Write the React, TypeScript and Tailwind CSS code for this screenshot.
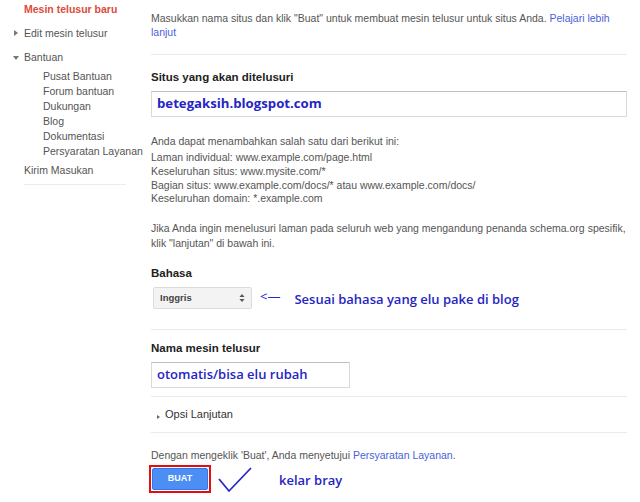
import React from 'react';

const sans = { fontFamily: '"Liberation Sans", Arial, sans-serif' };

function Sidebar() {
  const sub = ['Pusat Bantuan', 'Forum bantuan', 'Dukungan', 'Blog', 'Dokumentasi', 'Persyaratan Layanan'];
  return (
    <div className="w-[151px] shrink-0 pl-[24px] pt-[3px] text-[10.5px] text-[#555]">
      <div className="h-[13px] leading-[13px] font-bold text-[#dd4b39]">Mesin telusur baru</div>
      <div className="relative mt-[11px] h-[13px] leading-[13px]">
        <span className="absolute left-[-10px] top-[3px] h-0 w-0 border-y-[3px] border-l-[4px] border-y-transparent border-l-[#777]" />
        Edit mesin telusur
      </div>
      <div className="relative mt-[11px] h-[13px] leading-[13px]">
        <span className="absolute left-[-11px] top-[5px] h-0 w-0 border-x-[3px] border-t-[4px] border-x-transparent border-t-[#777]" />
        Bantuan
      </div>
      <div className="mt-[5px] pl-[19px]">
        {sub.map(s => (
          <div key={s} className="h-[15px] leading-[15px]">{s}</div>
        ))}
      </div>
      <div className="mt-[5px] h-[13px] leading-[13px]">Kirim Masukan</div>
      <div className="mt-[7px] w-[102px] border-t border-[#ebebeb]" />
    </div>
  );
}

function Arrows() {
  return (
    <svg width="6" height="10" viewBox="0 0 6 10" className="shrink-0">
      <path d="M0.5 4 L3 1 L5.5 4 Z" fill="#555" />
      <path d="M0.5 6 L3 9 L5.5 6 Z" fill="#555" />
    </svg>
  );
}

export default function App() {
  const annot = { fontFamily: '"Open Sans", "Noto Sans", sans-serif' };
  return (
    <div className="flex h-[502px] w-[640px] overflow-hidden bg-white" style={sans}>
      <Sidebar />
      <div className="w-[476px] pt-[11px] text-[10.5px] text-[#555]">
        <p className="leading-[14px]">
          Masukkan nama situs dan klik "Buat" untuk membuat mesin telusur untuk situs Anda.{' '}
          <span className="text-[#4a5fd8]">Pelajari lebih lanjut</span>
        </p>
        <div className="mt-[15px] border-t border-[#ebebeb]" />

        <div className="mt-[15px] text-[11.5px] font-bold leading-[14px] text-[#222]">Situs yang akan ditelusuri</div>
        <div className="mt-[7px] flex h-[26px] items-center border border-[#d9d9d9] border-t-[#c0c0c0] px-[5px]">
          <span className="text-[13.2px] font-bold text-[#2525c4]" style={annot}>betegaksih.blogspot.com</span>
        </div>

        <p className="mt-[17px] leading-[14px]">Anda dapat menambahkan salah satu dari berikut ini:</p>
        <div className="mt-[3px] leading-[13.8px]">
          <div>Laman individual: www.example.com/page.html</div>
          <div>Keseluruhan situs: www.mysite.com/*</div>
          <div>Bagian situs: www.example.com/docs/* atau www.example.com/docs/</div>
          <div>Keseluruhan domain: *.example.com</div>
        </div>
        <p className="mt-[15px] leading-[15px]">
          Jika Anda ingin menelusuri laman pada seluruh web yang mengandung penanda schema.org spesifik,
          <br />
          klik "lanjutan" di bawah ini.
        </p>

        <div className="mt-[15px] text-[11.5px] font-bold leading-[14px] text-[#222]">Bahasa</div>
        <div className="mt-[7px] flex items-center">
          <div className="ml-[2px] flex h-[22px] w-[99px] items-center justify-between rounded-[2px] border border-[#dcdcdc] bg-[#f3f3f3] pl-[6px] pr-[6px] text-[9.5px] font-bold text-[#444]">
            <span>Inggris</span>
            <Arrows />
          </div>
          <span className="ml-[8px] mt-[-4px] text-[13px] leading-none text-[#2525c4]" style={annot}>&lt;—</span>
          <span className="ml-[14px] mt-[3px] text-[13px] font-semibold text-[#2525c4]" style={annot}>
            Sesuai bahasa yang elu pake di blog
          </span>
        </div>
        <div className="mt-[19px] border-t border-[#ebebeb]" />

        <div className="mt-[11px] text-[11.5px] font-bold leading-[14px] text-[#222]">Nama mesin telusur</div>
        <div className="mt-[7px] flex h-[26px] w-[199px] items-center border border-[#d9d9d9] border-t-[#c0c0c0] px-[5px]">
          <span className="text-[13px] font-semibold text-[#2525c4]" style={annot}>otomatis/bisa elu rubah</span>
        </div>
        <div className="mt-[8px] border-t border-[#ebebeb]" />

        <div className="mt-[11px] flex h-[14px] items-center text-[11px] text-[#333]">
          <span className="ml-[6px] mr-[5px] mt-[4px] h-0 w-0 border-y-[2.5px] border-l-[3px] border-y-transparent border-l-[#666]" />
          Opsi Lanjutan
        </div>
        <div className="mt-[10px] border-t border-[#ebebeb]" />

        <p className="mt-[15px] leading-[14px]">
          Dengan mengeklik 'Buat', Anda menyetujui <span className="text-[#4a5fd8]">Persyaratan Layanan</span>.
        </p>
        <div className="mt-[3px] flex items-start">
          <div className="ml-[-2px] border-2 border-[#e01010] p-px">
            <div className="flex h-[22px] w-[56px] items-center justify-center rounded-[2px] border border-[#3079ed] bg-[#4d8ef5] text-[9px] font-bold text-white">
              BUAT
            </div>
          </div>
          <svg width="36" height="28" viewBox="0 0 36 28" className="ml-[6px] mt-[1px]">
            <path d="M2 13 L12 25 L34 2" fill="none" stroke="#2a2ac4" strokeWidth="1.8" />
          </svg>
          <span className="ml-[26px] mt-[6px] text-[13px] font-semibold text-[#2525c4]" style={annot}>kelar bray</span>
        </div>
      </div>
    </div>
  );
}
